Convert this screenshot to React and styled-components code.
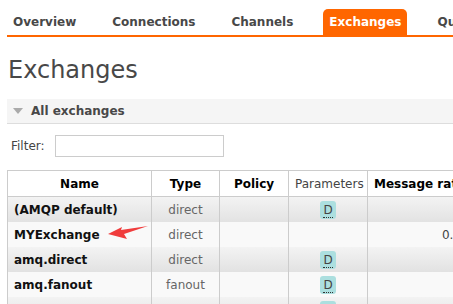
import React from "react";
import styled, { createGlobalStyle } from "styled-components";

const GlobalStyle = createGlobalStyle`
  html, body {
    margin: 0;
    padding: 0;
    background: #fff;
    overflow: hidden;
  }
  body {
    font-family: "DejaVu Sans", Verdana, sans-serif;
    font-size: 12px;
    color: #444;
  }
`;

const Page = styled.div`
  width: 453px;
  height: 304px;
  overflow: hidden;
  padding: 0 0 0 7px;
  box-sizing: border-box;
`;

const Tabs = styled.ul`
  display: flex;
  list-style: none;
  margin: 0;
  padding: 9px 0 0;
  gap: 24px;
  border-bottom: 2px solid #f60;
  width: 600px;
`;

const Tab = styled.li`
  height: 26px;
  line-height: 27px;
  padding: 0 6px;
  border-radius: 5px 5px 0 0;
  font-weight: bold;
  font-size: 12px;
  white-space: nowrap;
  color: ${(p) => (p.$active ? "#fff" : "#484848")};
  background: ${(p) => (p.$active ? "#f60" : "transparent")};
`;

const Title = styled.h1`
  margin: 17px 0 0 1px;
  font-size: 24px;
  font-weight: normal;
  line-height: 32px;
  color: #484848;
`;

const SectionBar = styled.div`
  display: flex;
  align-items: center;
  gap: 8px;
  margin-top: 13px;
  height: 24px;
  padding-left: 6px;
  background: #f5f5f5;
  border-bottom: 1px solid #ddd;
  font-weight: bold;
  font-size: 12px;
  color: #484848;
`;

const Triangle = styled.span`
  width: 0;
  height: 0;
  border-left: 5px solid transparent;
  border-right: 5px solid transparent;
  border-top: 6px solid #aaa;
`;

const FilterRow = styled.div`
  display: flex;
  align-items: center;
  gap: 10px;
  margin-top: 11px;
  padding-left: 4px;
`;

const FilterInput = styled.input`
  width: 169px;
  height: 22px;
  box-sizing: border-box;
  border: 1px solid #ccc;
  margin: 0;
`;

const Table = styled.table`
  margin-top: 13px;
  border-collapse: collapse;
  table-layout: fixed;
  width: 478px;
`;

const HeadCell = styled.th`
  height: 25px;
  padding: 0 6px;
  border: 1px solid #ccc;
  text-align: center;
  white-space: nowrap;
  overflow: hidden;
  font-size: 12px;
  font-weight: ${(p) => (p.$light ? "normal" : "bold")};
  color: ${(p) => (p.$light ? "#444" : "#000")};
  background: #fff;
`;

const Row = styled.tr`
  background: ${(p) =>
    p.$odd ? "linear-gradient(#f3f3f3, #e2e2e2)" : "#f9f9f9"};
`;

const Cell = styled.td`
  height: 25px;
  padding: 0 6px;
  border-left: 1px solid #ccc;
  border-right: 1px solid #ccc;
  white-space: nowrap;
  overflow: hidden;
  font-size: 12px;
  text-align: ${(p) => p.$align || "center"};
  color: ${(p) => (p.$dim ? "#666" : "#444")};
  vertical-align: middle;
`;

const NameCell = styled(Cell)`
  position: relative;
  overflow: visible;
  font-weight: bold;
  color: #111;
`;

const Badge = styled.abbr`
  display: inline-block;
  width: 16px;
  height: 18px;
  line-height: 18px;
  border-radius: 3px;
  background: #acdfdf;
  color: #444;
  text-decoration: none;
  vertical-align: middle;

  span {
    border-bottom: 1px dotted #333;
    line-height: 12px;
  }
`;

const Arrow = styled.svg`
  position: absolute;
  left: 98px;
  top: 0;
`;

const rows = [
  { name: "(AMQP default)", type: "direct", d: true },
  { name: "MYExchange", type: "direct", d: false, arrow: true, rate: "0.00/s" },
  { name: "amq.direct", type: "direct", d: true },
  { name: "amq.fanout", type: "fanout", d: true },
  { name: "amq.headers", type: "headers", d: true },
];

const tabs = ["Overview", "Connections", "Channels", "Exchanges", "Queues"];

export default function App() {
  return (
    <Page>
      <GlobalStyle />
      <Tabs>
        {tabs.map((t) => (
          <Tab key={t} $active={t === "Exchanges"}>
            {t}
          </Tab>
        ))}
      </Tabs>
      <Title>Exchanges</Title>
      <SectionBar>
        <Triangle />
        All exchanges
      </SectionBar>
      <FilterRow>
        Filter:
        <FilterInput type="text" />
      </FilterRow>
      <Table>
        <colgroup>
          <col style={{ width: 144 }} />
          <col style={{ width: 68 }} />
          <col style={{ width: 69 }} />
          <col style={{ width: 79 }} />
          <col style={{ width: 118 }} />
        </colgroup>
        <thead>
          <tr>
            <HeadCell>Name</HeadCell>
            <HeadCell>Type</HeadCell>
            <HeadCell>Policy</HeadCell>
            <HeadCell $light>Parameters</HeadCell>
            <HeadCell>Message rates in</HeadCell>
          </tr>
        </thead>
        <tbody>
          {rows.map((r, i) => (
            <Row key={r.name} $odd={i % 2 === 0}>
              <NameCell $align="left">
                {r.name}
                {r.arrow && (
                  <Arrow width="46" height="20" viewBox="0 0 46 20">
                    <polygon
                      points="2,12 16,5 15,8 42,4 18,12 21,17"
                      fill="#f03c3c"
                    />
                  </Arrow>
                )}
              </NameCell>
              <Cell $dim>{r.type}</Cell>
              <Cell />
              <Cell>
                {r.d && (
                  <Badge title="durable">
                    <span>D</span>
                  </Badge>
                )}
              </Cell>
              <Cell $align="right">{r.rate}</Cell>
            </Row>
          ))}
        </tbody>
      </Table>
    </Page>
  );
}
